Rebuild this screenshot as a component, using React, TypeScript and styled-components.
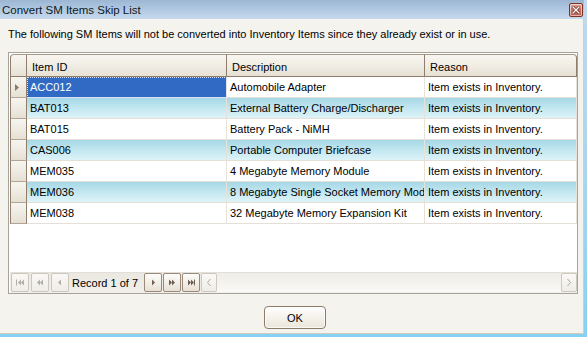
import React from "react";
import styled, { createGlobalStyle } from "styled-components";

const Global = createGlobalStyle`
  html, body { margin: 0; padding: 0; }
  body { width: 587px; height: 337px; overflow: hidden; font-family: "Liberation Sans", Arial, sans-serif; }
  * { box-sizing: border-box; }
`;

const Window = styled.div`
  width: 587px;
  height: 337px;
  padding: 0 3px 3px 0;
  background: linear-gradient(180deg, #c2d9ee 0%, #a9d6ef 50%, #86d1f3 100%);
  display: flex;
  flex-direction: column;
`;

const TitleBar = styled.div`
  height: 19px;
  flex: none;
  display: flex;
  align-items: center;
  justify-content: space-between;
  padding: 0 1px 0 2px;
  background: linear-gradient(180deg, #9cb6d3 0%, #b3cae3 55%, #c6d9ec 100%);
`;

const Title = styled.span`
  font-size: 11.5px;
  color: #101820;
  letter-spacing: 0;
  padding-top: 1px;
`;

const CloseButton = styled.div`
  width: 14px;
  height: 14px;
  margin-top: 1px;
  border: 1px solid #7c3328;
  border-radius: 2px;
  background: linear-gradient(180deg, #e2a297 0%, #cf6f5f 50%, #c45a49 100%);
  box-shadow: inset 0 0 0 1px rgba(255, 255, 255, 0.55);
  display: flex;
  align-items: center;
  justify-content: center;
`;

const Client = styled.div`
  flex: 1;
  display: flex;
  flex-direction: column;
  background: #f5f3ee;
  border-right: 1px solid #d3cec5;
  border-bottom: 1px solid #cfc9bf;
  padding: 9px 5px 4px 8px;
`;

const Message = styled.div`
  font-size: 11px;
  line-height: 13px;
  height: 13px;
  color: #000;
  margin-bottom: 11px;
  white-space: nowrap;
`;

const Panel = styled.div`
  width: 570px;
  height: 242px;
  border: 1px solid #a8a39a;
  padding: 1px 0 0 1px;
  background: #fff;
  display: flex;
  flex-direction: column;
`;

const Grid = styled.div`
  display: grid;
  grid-template-columns: 17px 200px 198px 152px;
  grid-auto-rows: 21px;
  grid-template-rows: 23px;
  font-size: 11px;
  color: #000;
`;

const HeaderCell = styled.div<{ $first?: boolean; $last?: boolean }>`
  display: flex;
  align-items: center;
  padding: 2px 0 0 5px;
  border-top: 1px solid #a89888;
  border-right: 1px solid #8f7e6e;
  border-bottom: 1px solid #8f7e6e;
  border-left: ${(p) => (p.$first ? "1px solid #8f7e6e" : "none")};
  border-top-left-radius: ${(p) => (p.$first ? "4px" : "0")};
  border-top-right-radius: ${(p) => (p.$last ? "4px" : "0")};
  background: linear-gradient(180deg, #f8f6f1 0%, #f1ede4 50%, #e7e1d4 100%);
  white-space: nowrap;
`;

const RowHeader = styled.div`
  border-left: 1px solid #8f7e6e;
  border-right: 1px solid #8f7e6e;
  border-bottom: 1px solid #b3a595;
  background: linear-gradient(180deg, #f7f5f0 0%, #efebe3 50%, #e6e0d3 100%);
  display: flex;
  align-items: center;
  padding-left: 4px;
`;

const Cell = styled.div<{ $stripe?: boolean; $selected?: boolean }>`
  display: flex;
  align-items: center;
  padding: 0 0 0 3px;
  border-right: 1px solid #e6e2da;
  border-bottom: 1px solid #e4e0d7;
  white-space: nowrap;
  overflow: hidden;
  background: ${(p) =>
    p.$selected
      ? "#316ac5"
      : p.$stripe
      ? "linear-gradient(180deg, #a6d8e6 0%, #c2e7f0 50%, #ddf3f8 100%)"
      : "#fff"};
  color: ${(p) => (p.$selected ? "#fff" : "#000")};
  outline: ${(p) => (p.$selected ? "1px dotted #d8e4fa" : "none")};
  outline-offset: -1px;
`;

const Spacer = styled.div`
  flex: 1;
`;

const NavBar = styled.div`
  height: 21px;
  flex: none;
  display: flex;
  align-items: center;
  padding: 0 0 1px 1px;
  border-top: 1px solid #e2dfd8;
  background: linear-gradient(180deg, #ebe8e1 0%, #f1efea 100%);
  font-size: 11px;
`;

const NavButton = styled.div<{ $enabled?: boolean; $gap?: number }>`
  width: 18px;
  height: 19px;
  flex: none;
  margin-right: ${(p) => p.$gap ?? 1}px;
  border: 1px solid ${(p) => (p.$enabled ? "#9a8a7b" : "#cbc7bf")};
  border-radius: 2px;
  background: ${(p) =>
    p.$enabled
      ? "linear-gradient(180deg, #fdfcfa 0%, #f1ede5 60%, #e6e0d4 100%)"
      : "linear-gradient(180deg, #f9f8f5 0%, #efede8 100%)"};
  display: flex;
  align-items: center;
  justify-content: center;
  color: ${(p) => (p.$enabled ? "#6f5f50" : "#b2aea6")};
`;

const RecordText = styled.span`
  margin: 0 6px 0 3px;
  color: #000;
  white-space: nowrap;
`;

const ScrollButton = styled.div`
  width: 16px;
  height: 19px;
  flex: none;
  border: 1px solid #cdc9c1;
  border-radius: 2px;
  background: linear-gradient(180deg, #faf9f7 0%, #efede8 100%);
  display: flex;
  align-items: center;
  justify-content: center;
  color: #aca89f;
`;

const ScrollTrack = styled.div`
  flex: 1;
  height: 19px;
  background: linear-gradient(180deg, #efede8 0%, #f4f3ef 60%, #fbfaf8 100%);
`;

const ButtonRow = styled.div`
  display: flex;
  justify-content: center;
  width: 570px;
  padding-left: 4px;
  margin-top: 12px;
`;

const OkButton = styled.button`
  width: 62px;
  height: 23px;
  border: 1px solid #8c7b6a;
  border-radius: 4px;
  background: linear-gradient(180deg, #ffffff 0%, #f6f3ee 45%, #ebe5d9 100%);
  box-shadow: inset 0 0 0 1px rgba(255, 255, 255, 0.7);
  font-family: "Liberation Sans", Arial, sans-serif;
  font-size: 11px;
  color: #000;
  padding: 0;
`;

type IconKind = "first" | "prevPage" | "prev" | "next" | "nextPage" | "last";

const NavIcon = ({ kind }: { kind: IconKind }) => {
  const left = (x: number) => `M${x} 0 L${x} 6 L${x - 3} 3 Z`;
  const right = (x: number) => `M${x} 0 L${x} 6 L${x + 3} 3 Z`;
  let d = "";
  let bar: number | null = null;
  switch (kind) {
    case "first":
      d = left(5) + left(8);
      bar = 0;
      break;
    case "prevPage":
      d = left(4) + left(7);
      break;
    case "prev":
      d = left(5);
      break;
    case "next":
      d = right(3);
      break;
    case "nextPage":
      d = right(1) + right(4);
      break;
    case "last":
      d = right(1) + right(4);
      bar = 7;
      break;
  }
  return (
    <svg width="9" height="7" viewBox="0 -0.5 9 7">
      <path d={d} fill="currentColor" />
      {bar !== null && <rect x={bar} y={0} width={1} height={6} fill="currentColor" />}
    </svg>
  );
};

const Chevron = ({ dir }: { dir: "left" | "right" }) => (
  <svg width="6" height="9" viewBox="0 0 6 9">
    <path
      d={dir === "left" ? "M4.5 1 L1.5 4.5 L4.5 8" : "M1.5 1 L4.5 4.5 L1.5 8"}
      stroke="currentColor"
      strokeWidth="1"
      fill="none"
    />
  </svg>
);

const rows = [
  ["ACC012", "Automobile Adapter", "Item exists in Inventory."],
  ["BAT013", "External Battery Charge/Discharger", "Item exists in Inventory."],
  ["BAT015", "Battery Pack - NiMH", "Item exists in Inventory."],
  ["CAS006", "Portable Computer Briefcase", "Item exists in Inventory."],
  ["MEM035", "4 Megabyte Memory Module", "Item exists in Inventory."],
  ["MEM036", "8 Megabyte Single Socket Memory Module", "Item exists in Inventory."],
  ["MEM038", "32 Megabyte Memory Expansion Kit", "Item exists in Inventory."],
];

export default function App() {
  return (
    <>
      <Global />
      <Window>
        <TitleBar>
          <Title>Convert SM Items Skip List</Title>
          <CloseButton>
            <svg width="8" height="8" viewBox="0 0 8 8">
              <path d="M1 1 L7 7 M7 1 L1 7" stroke="#5a1a12" strokeWidth="2.6" strokeLinecap="square" />
              <path d="M1 1 L7 7 M7 1 L1 7" stroke="#fff" strokeWidth="1.4" strokeLinecap="square" />
            </svg>
          </CloseButton>
        </TitleBar>
        <Client>
          <Message>
            The following SM Items will not be converted into Inventory Items since they already exist or in use.
          </Message>
          <Panel>
            <Grid>
              <HeaderCell $first />
              <HeaderCell>Item ID</HeaderCell>
              <HeaderCell>Description</HeaderCell>
              <HeaderCell $last>Reason</HeaderCell>
              {rows.map((r, i) => (
                <React.Fragment key={r[0]}>
                  <RowHeader>
                    {i === 0 && (
                      <svg width="4" height="7" viewBox="0 0 4 7">
                        <path d="M0 0 L4 3.5 L0 7 Z" fill="#8a7a6a" />
                      </svg>
                    )}
                  </RowHeader>
                  <Cell $stripe={i % 2 === 1} $selected={i === 0}>
                    {r[0]}
                  </Cell>
                  <Cell $stripe={i % 2 === 1}>{r[1]}</Cell>
                  <Cell $stripe={i % 2 === 1}>{r[2]}</Cell>
                </React.Fragment>
              ))}
            </Grid>
            <Spacer />
            <NavBar>
              <NavButton $gap={2}>
                <NavIcon kind="first" />
              </NavButton>
              <NavButton $gap={2}>
                <NavIcon kind="prevPage" />
              </NavButton>
              <NavButton $gap={0}>
                <NavIcon kind="prev" />
              </NavButton>
              <RecordText>Record 1 of 7</RecordText>
              <NavButton $enabled>
                <NavIcon kind="next" />
              </NavButton>
              <NavButton $enabled>
                <NavIcon kind="nextPage" />
              </NavButton>
              <NavButton $enabled $gap={1}>
                <NavIcon kind="last" />
              </NavButton>
              <ScrollButton>
                <Chevron dir="left" />
              </ScrollButton>
              <ScrollTrack />
              <ScrollButton>
                <Chevron dir="right" />
              </ScrollButton>
            </NavBar>
          </Panel>
          <ButtonRow>
            <OkButton>OK</OkButton>
          </ButtonRow>
        </Client>
      </Window>
    </>
  );
}
